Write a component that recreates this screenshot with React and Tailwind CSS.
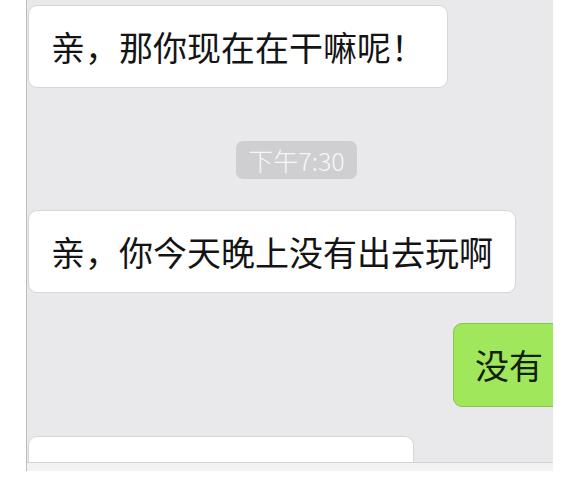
import React from 'react';

const font = { fontFamily: '"Noto Sans CJK SC", "Noto Sans", sans-serif' };

const Bubble = ({ children, className = '' }) => (
    <div
        className={`h-[83px] flex items-center px-[22px] bg-white border border-[#d6d6d8] rounded-[9px] text-[34px] leading-none text-[#141414] ${className}`}
    >
        {children}
    </div>
);

const App = () => {
    return (
        <div className="w-[577px] h-[480px] bg-white overflow-hidden" style={font}>
            <div className="ml-[26px] w-[527px] h-[471px] bg-[#e9e9ec] border-l border-[#bdbdc0] flex flex-col overflow-hidden">
                <div className="flex-1 flex flex-col pl-[1px] pt-[5px] overflow-hidden">
                    <div className="flex">
                        <Bubble>亲，那你现在在干嘛呢！</Bubble>
                    </div>

                    <div className="flex justify-center pl-[12px] mt-[53px]">
                        <span className="h-[38px] px-[12px] flex items-center rounded-[7px] bg-[#cfcfd1] text-[#f7f7f7] text-[25px] leading-none font-light" style={{ fontFamily: '"Noto Sans CJK SC", "Liberation Sans", sans-serif' }}>
                            下午7:30
                        </span>
                    </div>

                    <div className="flex mt-[31px]">
                        <Bubble>亲，你今天晚上没有出去玩啊</Bubble>
                    </div>

                    <div className="flex justify-end mt-[30px] -mr-[12px]">
                        <div className="h-[84px] flex items-center px-[21px] bg-[#a0e75c] border border-[#86c64a] rounded-[9px] text-[34px] leading-none text-[#13200c]">
                            没有
                        </div>
                    </div>

                    <div className="flex mt-[29px]">
                        <div className="w-[386px] h-[40px] bg-white border border-[#d6d6d8] rounded-t-[9px]" />
                    </div>
                </div>
                <div className="h-[9px] shrink-0 bg-[#f2f2f4] border-t border-[#d2d2d4]" />
            </div>
        </div>
    );
};

export default App;
